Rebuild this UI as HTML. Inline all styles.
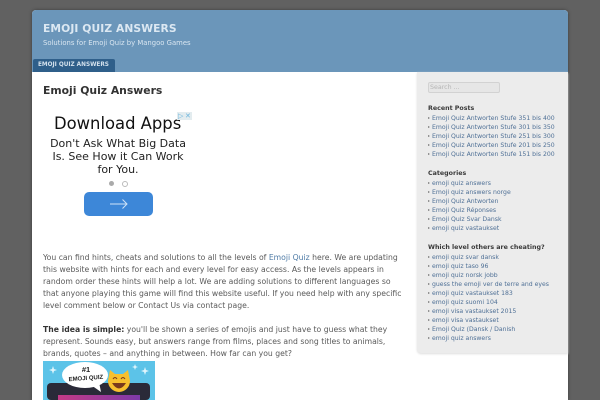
<!DOCTYPE html>
<html><head><meta charset="utf-8"><style>
html,body{margin:0;padding:0;width:600px;height:400px;overflow:hidden;background:#616161;font-family:"DejaVu Sans",sans-serif}
#all{position:absolute;left:0;top:0;width:600px;height:400px;overflow:hidden;filter:blur(.35px)}
.a{position:absolute;white-space:nowrap}
#wrap{position:absolute;left:32px;top:10px;width:536px;height:390px;background:#fff;border-radius:4px 4px 0 0;box-shadow:0 0 3px #3a3a3a;overflow:hidden}
.t{font-size:7.7px;line-height:12px;color:#5a5a5a;left:43px}
.s{font-size:6.15px;line-height:9px;color:#4f7096;left:432px}
.s:before{content:"";position:absolute;left:-4px;top:3px;border-left:2px solid #777;border-top:1.5px solid transparent;border-bottom:1.5px solid transparent}
.h{font-size:6.3px;line-height:10px;font-weight:bold;color:#3a3a3a;left:428px}
</style></head><body>
<div id="all">
<div id="wrap"></div>
<div class="a" style="left:32px;top:10px;width:536px;height:62px;background:#6b96ba;border-radius:4px 4px 0 0"></div>
<div class="a" style="left:43px;top:21px;font-size:10.7px;line-height:16px;font-weight:bold;letter-spacing:.1px;color:#dce8f2">EMOJI QUIZ ANSWERS</div>
<div class="a" style="left:43px;top:38px;font-size:6.85px;line-height:10px;color:#d8e5f0">Solutions for Emoji Quiz by Mangoo Games</div>
<div class="a" style="left:33px;top:59px;width:82px;height:13px;background:#2f5f8a;border-radius:2px 2px 0 0"></div>
<div class="a" style="left:38px;top:60px;font-size:5.75px;line-height:11px;font-weight:bold;color:#d2e0ec">EMOJI QUIZ ANSWERS</div>
<div class="a" style="left:43px;top:83px;font-size:10.8px;line-height:16px;font-weight:bold;color:#333">Emoji Quiz Answers</div>

<div class="a" style="left:417px;top:72px;width:151px;height:281px;background:#ececec;border-radius:0 0 0 4px;box-shadow:0 1px 2px #ddd"></div>

<div class="a" style="left:54px;top:113px;font-size:16.4px;line-height:22px;color:#111">Download Apps</div>
<div class="a" style="left:177px;top:112px;width:15px;height:8px;background:#e3ecef"></div>
<div class="a" style="left:178px;top:112px;font-size:7px;line-height:8px;color:#6bb5dd">▷</div>
<div class="a" style="left:185px;top:112px;font-size:7px;line-height:8px;color:#6bb5dd">✕</div>
<div class="a" style="left:43px;top:136.5px;width:150px;text-align:center;white-space:normal;font-size:11px;line-height:13px;color:#222">Don't Ask What Big Data<br>Is. See How it Can Work<br>for You.</div>
<div class="a" style="left:108.5px;top:180.5px;width:5px;height:5px;border-radius:50%;background:#aaa"></div>
<div class="a" style="left:121.5px;top:180.5px;width:4px;height:4px;border-radius:50%;border:.7px solid #bbb"></div>
<div class="a" style="left:84px;top:192px;width:69px;height:24px;border-radius:5px;background:#3d87d8"></div>
<svg class="a" style="left:109px;top:198px" width="20" height="12" viewBox="0 0 20 12"><path d="M1 6H18M13.5 1.5L18 6L13.5 10.5" fill="none" stroke="#cfe3f7" stroke-width="1"/></svg>

<div class="a t" style="top:252px">You can find hints, cheats and solutions to all the levels of <span style="color:#4f7ba6">Emoji Quiz</span> here. We are updating</div>
<div class="a t" style="top:264px">this website with hints for each and every level for easy access. As the levels appears in</div>
<div class="a t" style="top:276px">random order these hints will help a lot. We are adding solutions to different languages so</div>
<div class="a t" style="top:288px">that anyone playing this game will find this website useful. If you need help with any specific</div>
<div class="a t" style="top:300px">level comment below or Contact Us via contact page.</div>
<div class="a t" style="top:324px"><b style="color:#333">The idea is simple:</b> you'll be shown a series of emojis and just have to guess what they</div>
<div class="a t" style="top:336px">represent. Sounds easy, but answers range from films, places and song titles to animals,</div>
<div class="a t" style="top:348px">brands, quotes – and anything in between. How far can you get?</div>

<svg class="a" style="left:43px;top:361px" width="112" height="39" viewBox="0 0 112 39">
<defs><linearGradient id="g" x1="0" x2="1" y1="0" y2="0"><stop offset="0" stop-color="#c43a86"/><stop offset="1" stop-color="#7d3aa8"/></linearGradient></defs>
<rect width="112" height="39" fill="#5cc3e8"/>
<rect x="4" y="22" width="103" height="17" rx="4" fill="#2a2a38"/>
<rect x="15" y="34" width="82" height="5" fill="url(#g)"/>
<ellipse cx="42" cy="14" rx="23" ry="13" fill="#fff"/>
<path d="M48 24L58 31L56 21Z" fill="#fff"/>
<text x="43" y="11" font-size="7.5" font-weight="bold" text-anchor="middle" font-family="Liberation Sans" fill="#222">#1</text>
<text x="43" y="19" font-size="6" font-weight="bold" text-anchor="middle" font-family="Liberation Sans" fill="#222" transform="rotate(-4 43 19)">EMOJI QUIZ</text>
<path d="M65 20L67 9L72 13H80L85 9L87 20A11 11 0 1 1 65 20Z" fill="#f7c02e"/>
<path d="M69 22Q76 33 83 22Z" fill="#7a3a1c"/>
<path d="M70 18q2-3 4 0M78 18q2-3 4 0" fill="none" stroke="#7a3a1c" stroke-width="1"/>
<path d="M10 5l1 3 3 1-3 1-1 3-1-3-3-1 3-1zM102 6l1 3 3 1-3 1-1 3-1-3-3-1 3-1zM92 3l.8 2.200 2.200.8-2.200.8-.8 2.200-.8-2.200-2.200-.8 2.200-.8z" fill="#dff5fc"/>
</svg>

<div class="a" style="left:428px;top:82px;width:70px;height:9px;background:#e6e6e6;border:1px solid #d2d2d2;border-radius:2px"></div>
<div class="a" style="left:430px;top:83px;font-size:6.3px;line-height:9px;color:#b5b5b5">Search ...</div>

<div class="a h" style="top:104px">Recent Posts</div>
<div class="a s" style="top:114px">Emoji Quiz Antworten Stufe 351 bis 400</div>
<div class="a s" style="top:123px">Emoji Quiz Antworten Stufe 301 bis 350</div>
<div class="a s" style="top:132px">Emoji Quiz Antworten Stufe 251 bis 300</div>
<div class="a s" style="top:141px">Emoji Quiz Antworten Stufe 201 bis 250</div>
<div class="a s" style="top:150px">Emoji Quiz Antworten Stufe 151 bis 200</div>

<div class="a h" style="top:169px">Categories</div>
<div class="a s" style="top:179px">emoji quiz answers</div>
<div class="a s" style="top:188px">Emoji quiz answers norge</div>
<div class="a s" style="top:197px">Emoji Quiz Antworten</div>
<div class="a s" style="top:206px">Emoji Quiz Réponses</div>
<div class="a s" style="top:215px">Emoji Quiz Svar Dansk</div>
<div class="a s" style="top:224px">emoji quiz vastaukset</div>

<div class="a h" style="top:243px">Which level others are cheating?</div>
<div class="a s" style="top:253px">emoji quiz svar dansk</div>
<div class="a s" style="top:262px">emoji quiz taso 96</div>
<div class="a s" style="top:271px">emoji quiz norsk jobb</div>
<div class="a s" style="top:280px">guess the emoji ver de terre and eyes</div>
<div class="a s" style="top:289px">emoji quiz vastaukset 183</div>
<div class="a s" style="top:298px">emoji quiz suomi 104</div>
<div class="a s" style="top:307px">emoji visa vastaukset 2015</div>
<div class="a s" style="top:316px">emoji visa vastaukset</div>
<div class="a s" style="top:325px">Emoji Quiz (Dansk / Danish</div>
<div class="a s" style="top:334px">emoji quiz answers</div>
</div>
</body></html>
